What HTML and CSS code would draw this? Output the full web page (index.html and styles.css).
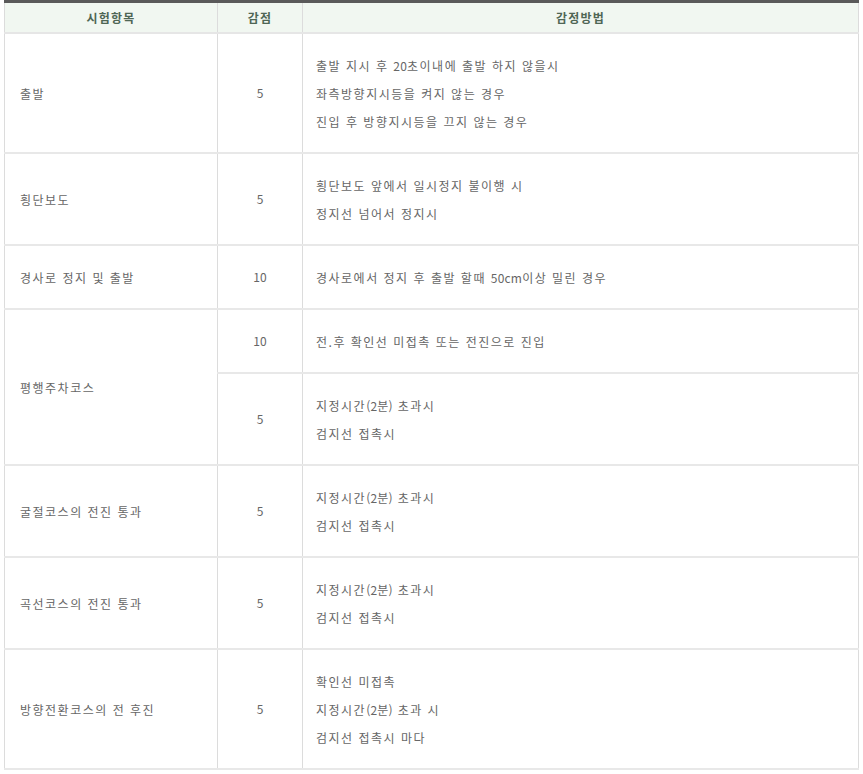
FILE: index.html
```html
<!DOCTYPE html>
<html lang="ko">
<head>
<meta charset="utf-8">
<title>감점 기준</title>
<link rel="stylesheet" href="styles.css">
</head>
<body>
<div class="wrap">
<table class="score">
  <colgroup>
    <col class="c1"><col class="c2"><col class="c3">
  </colgroup>
  <thead>
    <tr><th>시험항목</th><th>감점</th><th>감정방법</th></tr>
  </thead>
  <tbody>
    <tr>
      <td class="item">출발</td>
      <td class="pt">5</td>
      <td class="desc"><p>출발 지시 후 <span class="num">20</span>초이내에 출발 하지 않을시</p><p>좌측방향지시등을 켜지 않는 경우</p><p>진입 후 방향지시등을 끄지 않는 경우</p></td>
    </tr>
    <tr>
      <td class="item">횡단보도</td>
      <td class="pt">5</td>
      <td class="desc"><p>횡단보도 앞에서 일시정지 불이행 시</p><p>정지선 넘어서 정지시</p></td>
    </tr>
    <tr>
      <td class="item">경사로 정지 및 출발</td>
      <td class="pt">10</td>
      <td class="desc"><p>경사로에서 정지 후 출발 할때 <span class="num">50cm</span>이상 밀린 경우</p></td>
    </tr>
    <tr>
      <td class="item" rowspan="2">평행주차코스</td>
      <td class="pt">10</td>
      <td class="desc"><p>전.후 확인선 미접촉 또는 전진으로 진입</p></td>
    </tr>
    <tr>
      <td class="pt">5</td>
      <td class="desc"><p>지정시간<span class="num">(2분)</span> 초과시</p><p>검지선 접촉시</p></td>
    </tr>
    <tr>
      <td class="item">굴절코스의 전진 통과</td>
      <td class="pt">5</td>
      <td class="desc"><p>지정시간<span class="num">(2분)</span> 초과시</p><p>검지선 접촉시</p></td>
    </tr>
    <tr>
      <td class="item">곡선코스의 전진 통과</td>
      <td class="pt">5</td>
      <td class="desc"><p>지정시간<span class="num">(2분)</span> 초과시</p><p>검지선 접촉시</p></td>
    </tr>
    <tr>
      <td class="item">방향전환코스의 전 후진</td>
      <td class="pt">5</td>
      <td class="desc"><p>확인선 미접촉</p><p>지정시간<span class="num">(2분)</span> 초과 시</p><p>검지선 접촉시 마다</p></td>
    </tr>
  </tbody>
</table>
</div>
</body>
</html>
```

FILE: styles.css
```css
html, body {
  margin: 0;
  padding: 0;
  background: #ffffff;
}

body {
  font-family: "Noto Sans CJK KR", "Noto Sans", sans-serif;
  font-size: 12px;
  color: #666666;
}

.wrap {
  padding: 0 5px 0 4px;
}

.score {
  width: 854px;
  border-collapse: collapse;
  table-layout: fixed;
  border-top: 3px solid #5a5a5a;
}

.c1 { width: 213px; }
.c2 { width: 85px; }
.c3 { width: 556px; }

.score th {
  height: 29px;
  padding: 0;
  background: #f1f7f1;
  color: #4f6655;
  font-weight: bold;
  font-size: 12px;
  letter-spacing: 1.2px;
  text-align: center;
  border-left: 1px solid #dcdcdc;
  border-right: 1px solid #dcdcdc;
  border-bottom: 2px solid #e6e6e6;
}

.score td {
  padding: 17px 0;
  border-left: 1px solid #dcdcdc;
  border-right: 1px solid #dcdcdc;
  border-bottom: 2px solid #e8e8e8;
  vertical-align: middle;
  line-height: 28px;
  letter-spacing: 1.5px;
}

.score td.item {
  padding-left: 15px;
  padding-top: 18px;
  padding-bottom: 16px;
}

.score td.pt {
  text-align: center;
  letter-spacing: 0;
}

.score td.desc {
  padding-left: 13px;
  padding-top: 18px;
  padding-bottom: 16px;
}

.score td.desc p {
  margin: 0;
  line-height: 28px;
}

.num {
  letter-spacing: 0.2px;
}
```
